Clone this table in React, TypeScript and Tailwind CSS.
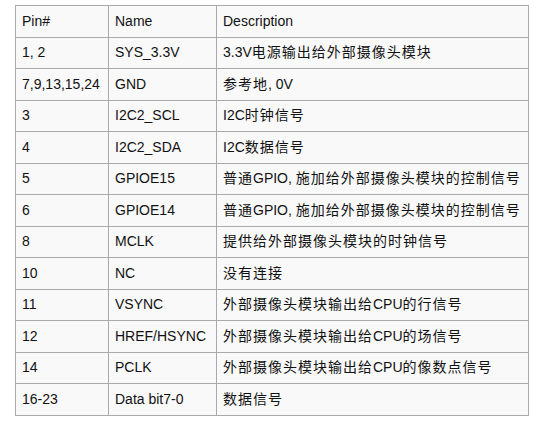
const rows: [string, string, string][] = [
  ["1, 2", "SYS_3.3V", "3.3V电源输出给外部摄像头模块"],
  ["7,9,13,15,24", "GND", "参考地, 0V"],
  ["3", "I2C2_SCL", "I2C时钟信号"],
  ["4", "I2C2_SDA", "I2C数据信号"],
  ["5", "GPIOE15", "普通GPIO, 施加给外部摄像头模块的控制信号"],
  ["6", "GPIOE14", "普通GPIO, 施加给外部摄像头模块的控制信号"],
  ["8", "MCLK", "提供给外部摄像头模块的时钟信号"],
  ["10", "NC", "没有连接"],
  ["11", "VSYNC", "外部摄像头模块输出给CPU的行信号"],
  ["12", "HREF/HSYNC", "外部摄像头模块输出给CPU的场信号"],
  ["14", "PCLK", "外部摄像头模块输出给CPU的像数点信号"],
  ["16-23", "Data bit7-0", "数据信号"],
];

const cell = "border border-[#aaaaaa] px-[6px] py-0 align-middle whitespace-nowrap";

// chinese glyphs in the original sit on a slightly wider pitch than latin ones
function Desc({ text }: { text: string }) {
  const parts = text.split(/([\u4e00-\u9fff]+)/);
  return (
    <>
      {parts.map((p, i) =>
        /[\u4e00-\u9fff]/.test(p) ? (
          <span key={i} className="tracking-[1px]">
            {p}
          </span>
        ) : (
          <span key={i}>{p}</span>
        )
      )}
    </>
  );
}

export default function App() {
  return (
    <div className="min-h-[423px] w-[536px] bg-white pt-[5px] pl-[15px] font-['Liberation_Sans','Noto_Sans_CJK_SC',sans-serif] text-[14px] text-[#111]">
      <table className="w-[514px] table-fixed border-collapse bg-[#f9f9f9]">
        <colgroup>
          <col className="w-[93px]" />
          <col className="w-[108px]" />
          <col />
        </colgroup>
        <thead>
          <tr className="h-[31.5px] text-left">
            <th className={cell + " font-normal"}>Pin#</th>
            <th className={cell + " font-normal"}>Name</th>
            <th className={cell + " font-normal"}>Description</th>
          </tr>
        </thead>
        <tbody>
          {rows.map((r) => (
            <tr key={r[0] + r[1]} className="h-[31.5px]">
              <td className={cell}>{r[0]}</td>
              <td className={cell}>{r[1]}</td>
              <td className={cell}>
                <Desc text={r[2]} />
              </td>
            </tr>
          ))}
        </tbody>
      </table>
    </div>
  );
}
